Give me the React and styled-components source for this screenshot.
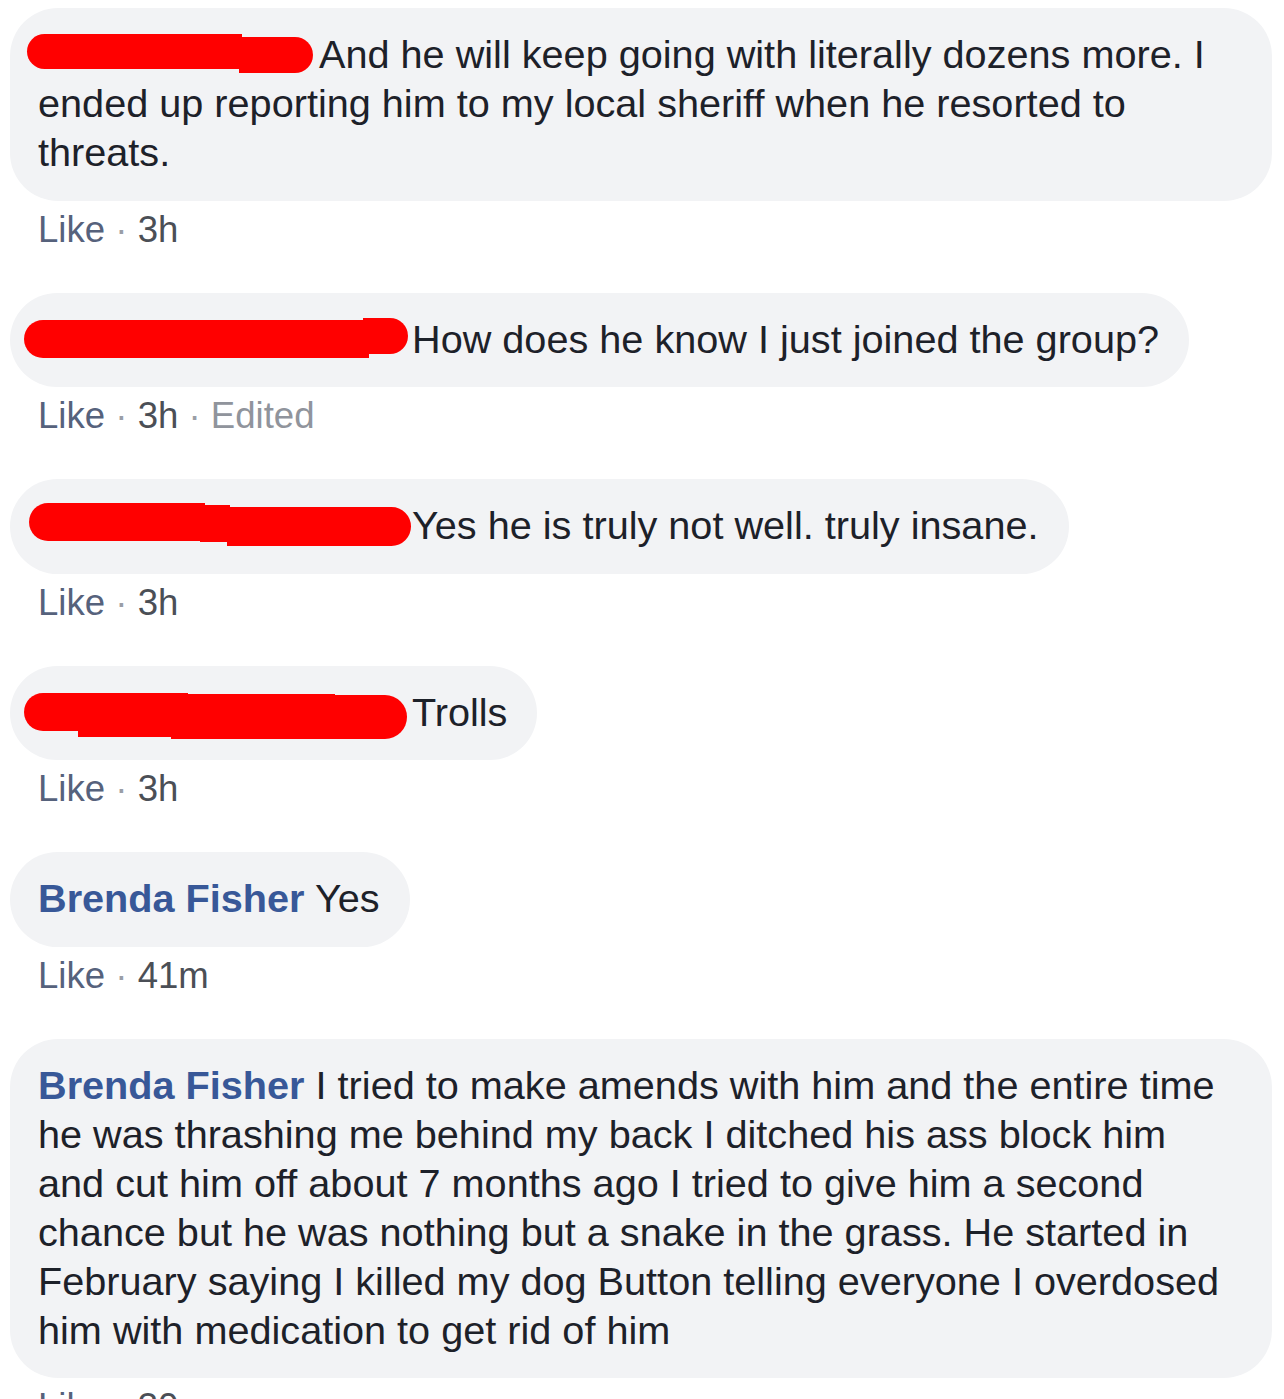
import React from "react";
import styled, { createGlobalStyle } from "styled-components";

const GlobalStyle = createGlobalStyle`
  html, body {
    margin: 0;
    padding: 0;
    background: #ffffff;
  }
  body {
    font-family: "Liberation Sans", Arial, Helvetica, sans-serif;
    -webkit-font-smoothing: antialiased;
  }
`;

const Thread = styled.div`
  display: flex;
  flex-direction: column;
  align-items: flex-start;
  padding: 8px 12px 0 10px;
  width: 1284px;
  height: 1399px;
  box-sizing: border-box;
  overflow: hidden;
`;

const Comment = styled.div`
  display: flex;
  flex-direction: column;
  align-items: flex-start;
  align-self: stretch;
  margin-bottom: 39px;
`;

const Bubble = styled.div`
  box-sizing: border-box;
  align-self: ${(p) => (p.$block ? "stretch" : "flex-start")};
  background: #f2f3f5;
  border-radius: 48px;
  padding: 22px ${(p) => (p.$block ? 42 : 30)}px 23.5px 28px;
  font-size: 39.65px;
  line-height: 49px;
  color: #1d2129;
`;

const Name = styled.span`
  font-weight: 700;
  color: #385898;
`;

const Redaction = styled.svg`
  display: inline-block;
  margin: -8px ${(p) => p.$after}px -8px ${(p) => -p.$before}px;
  vertical-align: ${(p) => 8 - p.$drop}px;
  overflow: visible;
`;

const Actions = styled.div`
  margin-top: 4px;
  padding-left: 28px;
  font-size: 36.6px;
  line-height: 49px;
  white-space: nowrap;
`;

const Like = styled.span`
  color: #56627c;
`;

const Dot = styled.span`
  color: #9a9ea6;
`;

const Stamp = styled.span`
  color: ${(p) => (p.$light ? "#90949c" : "#4b4f56")};
`;

/* each redaction scribble: segments [x, y, w, h]; first has a round left cap, last a round right cap */
const blobs = {
  a: {
    w: 286, h: 39, before: 11, after: 6, drop: 5,
    segs: [
      [0, 0, 215, 35],
      [212, 3, 74, 36],
    ],
  },
  b: {
    w: 384, h: 40, before: 14, after: 4, drop: 5,
    segs: [
      [0, 2, 345, 38],
      [339, 0, 45, 36],
    ],
  },
  c: {
    w: 382, h: 43, before: 9, after: 1, drop: 7,
    segs: [
      [0, 0, 176, 38],
      [171, 2, 30, 37],
      [198, 4, 184, 39],
    ],
  },
  d: {
    w: 383, h: 48, before: 14, after: 5, drop: 13,
    segs: [
      [0, 2, 164, 38],
      [54, 3, 257, 43],
      [147, 4, 236, 44],
    ],
  },
};

function segPath([x, y, w, h], first, last) {
  const r = h / 2;
  const left = first ? x + r : x;
  const right = last ? x + w - r : x + w;
  let d = `M${left},${y} H${right}`;
  d += last ? ` A${r},${r} 0 0 1 ${right},${y + h}` : ` V${y + h}`;
  d += ` H${left}`;
  d += first ? ` A${r},${r} 0 0 1 ${left},${y}` : ` V${y}`;
  return d + " Z";
}

function Blob({ kind }) {
  const b = blobs[kind];
  const n = b.segs.length;
  return (
    <Redaction
      width={b.w}
      height={b.h}
      viewBox={`0 0 ${b.w} ${b.h}`}
      $before={b.before}
      $after={b.after}
      $drop={b.drop}
      aria-hidden="true"
    >
      {b.segs.map((s, i) => (
        <path key={i} d={segPath(s, i === 0, i === n - 1)} fill="#ff0000" />
      ))}
    </Redaction>
  );
}

function Meta({ time, edited }) {
  return (
    <Actions>
      <Like>Like</Like>
      <Dot> · </Dot>
      <Stamp>{time}</Stamp>
      {edited && (
        <>
          <Dot> · </Dot>
          <Stamp $light>Edited</Stamp>
        </>
      )}
    </Actions>
  );
}

const comments = [
  {
    blob: "a",
    block: true,
    text: "And he will keep going with literally dozens more. I ended up reporting him to my local sheriff when he resorted to threats.",
    time: "3h",
  },
  {
    blob: "b",
    text: "How does he know I just joined the group?",
    time: "3h",
    edited: true,
  },
  {
    blob: "c",
    text: "Yes he is truly not well. truly insane.",
    time: "3h",
  },
  {
    blob: "d",
    text: "Trolls",
    time: "3h",
  },
  {
    name: "Brenda Fisher",
    text: "Yes",
    time: "41m",
  },
  {
    name: "Brenda Fisher",
    block: true,
    text: "I tried to make amends with him and the entire time he was thrashing me behind my back I ditched his ass block him and cut him off about 7 months ago I tried to give him a second chance but he was nothing but a snake in the grass. He started in February saying I killed my dog Button telling everyone I overdosed him with medication to get rid of him",
    time: "30m",
  },
];

export default function App() {
  return (
    <>
      <GlobalStyle />
      <Thread>
        {comments.map((c, i) => (
          <Comment key={i}>
            <Bubble $block={c.block}>
              {c.blob && <Blob kind={c.blob} />}
              {c.name && <Name>{c.name}</Name>}
              {c.name ? " " : ""}
              {c.text}
            </Bubble>
            <Meta time={c.time} edited={c.edited} />
          </Comment>
        ))}
      </Thread>
    </>
  );
}
